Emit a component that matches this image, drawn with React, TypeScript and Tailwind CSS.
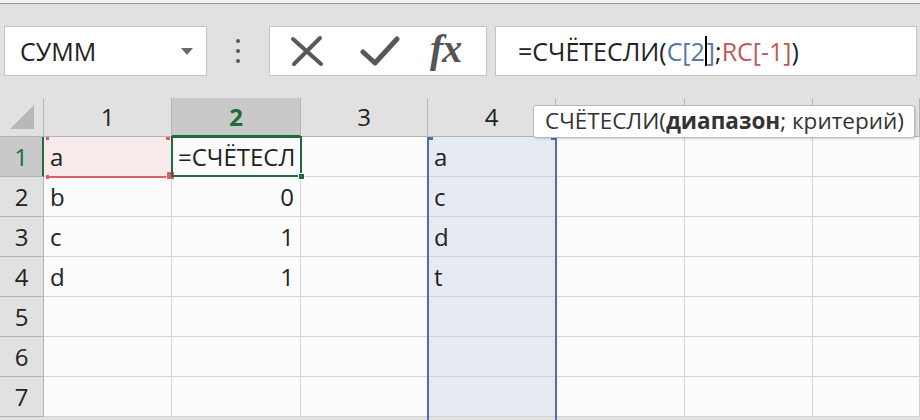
import React from 'react';

const cols = [128, 129, 127, 128, 129, 128, 107];
const rows = [1, 2, 3, 4, 5, 6, 7];

const data: Record<string, { text: string; right?: boolean }> = {
  '1-0': { text: 'a' },
  '1-1': { text: '=СЧЁТЕСЛ' },
  '2-0': { text: 'b' },
  '2-1': { text: '0', right: true },
  '3-0': { text: 'c' },
  '3-1': { text: '1', right: true },
  '4-0': { text: 'd' },
  '4-1': { text: '1', right: true },
  '1-3': { text: 'a' },
  '2-3': { text: 'c' },
  '3-3': { text: 'd' },
  '4-3': { text: 't' },
};

const XIcon = () => (
  <svg width="34" height="32" viewBox="0 0 34 32">
    <path d="M3 4 L31 29 M30 3 L4 29" stroke="#585858" strokeWidth="4" strokeLinecap="round" fill="none" />
  </svg>
);

const CheckIcon = () => (
  <svg width="40" height="32" viewBox="0 0 40 32">
    <path d="M3 17 L15 28 L37 4" stroke="#585858" strokeWidth="5" strokeLinecap="round" strokeLinejoin="round" fill="none" />
  </svg>
);

export default function App() {
  return (
    <div className="w-[920px] h-[420px] overflow-hidden bg-[#e1e1e1] font-['Open_Sans','Noto_Sans',sans-serif] text-[#222]">
      {/* top strip */}
      <div className="h-[4px] bg-[#f2f2f2] border-b border-[#9a9a9a]" />

      {/* formula toolbar */}
      <div className="flex items-center h-[50px] mt-[22px] pl-[4px]">
        <div className="flex items-center justify-between w-[203px] h-[50px] bg-white border border-[#c4c4c4] pl-[15px] pr-[13px]">
          <span className="text-[25px] leading-none">СУММ</span>
          <svg width="12" height="7" viewBox="0 0 12 7">
            <path d="M0 0 H12 L6 7 Z" fill="#6a6a6a" />
          </svg>
        </div>
        <div className="w-[62px] flex flex-col items-center gap-[6px]">
          <div className="w-[4px] h-[4px] rounded-full bg-[#555]" />
          <div className="w-[4px] h-[4px] rounded-full bg-[#555]" />
          <div className="w-[4px] h-[4px] rounded-full bg-[#555]" />
        </div>
        <div className="flex items-center w-[218px] h-[50px] bg-white border border-[#c4c4c4] pl-[20px]">
          <XIcon />
          <div className="ml-[36px]">
            <CheckIcon />
          </div>
          <span className="ml-[30px] font-['Liberation_Serif',serif] italic font-bold text-[40px] leading-none text-[#555] tracking-[-1px] -mt-[4px]">fx</span>
        </div>
        <div className="ml-[8px] flex items-center w-[422px] h-[50px] bg-white border border-[#c4c4c4] pl-[22px] text-[25px] leading-none">
          <span>=СЧЁТЕСЛИ(</span>
          <span className="text-[#5577a8]">C[2</span>
          <span className="w-[2px] h-[30px] bg-black" />
          <span className="text-[#5577a8]">]</span>
          <span>;</span>
          <span className="text-[#c0585b]">RC[-1]</span>
          <span>)</span>
        </div>
      </div>

      {/* sheet */}
      <div className="relative mt-[22px]">
        <div className="grid grid-cols-[44px_128px_129px_127px_128px_129px_128px_107px] grid-rows-[39px_repeat(7,40px)]">
          {/* header row */}
          <div className="flex items-end justify-center pb-[7px] border-r border-b border-[#b4b4b4]">
            <svg width="24" height="24" viewBox="0 0 24 24">
              <path d="M24 0 V24 H0 Z" fill="#b8b8b8" />
            </svg>
          </div>
          {cols.map((_, i) => (
            <div
              key={i}
              className={
                i === 1
                  ? 'flex items-center justify-center bg-[#c9c9c9] border-r border-[#b4b4b4] border-b-2 border-b-[#1e6b40] text-[#1e6b40] font-bold text-[24px]'
                  : 'flex items-center justify-center border-r border-b border-[#b4b4b4] text-[24px]'
              }
            >
              {/* columns 5-7 sit under the tooltip */}
              {i < 4 ? i + 1 : null}
            </div>
          ))}

          {rows.map((r) => (
            <React.Fragment key={r}>
              <div
                className={
                  r === 1
                    ? 'flex items-center justify-center bg-[#c9c9c9] border-b border-[#b4b4b4] border-r-2 border-r-[#1e6b40] text-[#1e6b40] text-[24px]'
                    : 'flex items-center justify-center border-r border-b border-[#b4b4b4] text-[24px]'
                }
              >
                {r}
              </div>
              {cols.map((_, c) => {
                const d = data[`${r}-${c}`];
                const bg =
                  r === 1 && c === 0 ? 'bg-[#f8e9ea]' : c === 3 ? 'bg-[#e6eaf3]' : 'bg-[#fbfbfb]';
                return (
                  <div
                    key={c}
                    className={`flex items-center px-[6px] text-[24px] leading-none border-r border-b border-[#d4d4d4] ${bg} ${
                      d?.right ? 'justify-end' : ''
                    }`}
                  >
                    {d?.text}
                  </div>
                );
              })}
            </React.Fragment>
          ))}
        </div>

        {/* range reference A1 (red) */}
        <div className="absolute left-[46px] top-[39px] w-[126px] h-[40px] pointer-events-none">
          <div className="absolute left-[2px] right-[6px] bottom-[-1px] h-[2px] bg-[#d9606a]" />
          <div className="absolute left-0 top-0 w-[3px] h-[3px] bg-[#d9606a]" />
          <div className="absolute right-[2px] top-0 w-[4px] h-[3px] bg-[#d9606a]" />
          <div className="absolute left-0 bottom-[-2px] w-[3px] h-[4px] bg-[#d9606a]" />
          <div className="absolute right-[-2px] bottom-[-2px] w-[7px] h-[7px] bg-[#d9606a]" />
        </div>

        {/* active cell B1 */}
        <div className="absolute left-[171px] top-[38px] w-[131px] h-[41px] border-2 border-[#1e6b40] pointer-events-none">
          <div className="absolute right-[-5px] bottom-[-5px] w-[7px] h-[7px] bg-[#1e6b40] border border-white" />
        </div>

        {/* range reference column 4 (blue) */}
        <div className="absolute left-[427px] top-[39px] w-[130px] h-[290px] border-x-2 border-[#4f6cb3] pointer-events-none">
          <div className="absolute left-[-2px] top-0 w-[6px] h-[3px] bg-[#4f6cb3]" />
          <div className="absolute right-[-2px] top-0 w-[6px] h-[3px] bg-[#4f6cb3]" />
        </div>

        {/* function tooltip */}
        <div className="absolute left-[533px] top-[7px] w-[382px] h-[33px] flex items-center pl-[11px] bg-white border border-[#b9b9b9] rounded-[3px] shadow-[1px_1px_2px_rgba(0,0,0,0.15)] text-[22.5px] leading-none text-[#333] whitespace-nowrap">
          СЧЁТЕСЛИ(<b className="font-bold">диапазон</b>; критерий)
        </div>
      </div>
    </div>
  );
}
